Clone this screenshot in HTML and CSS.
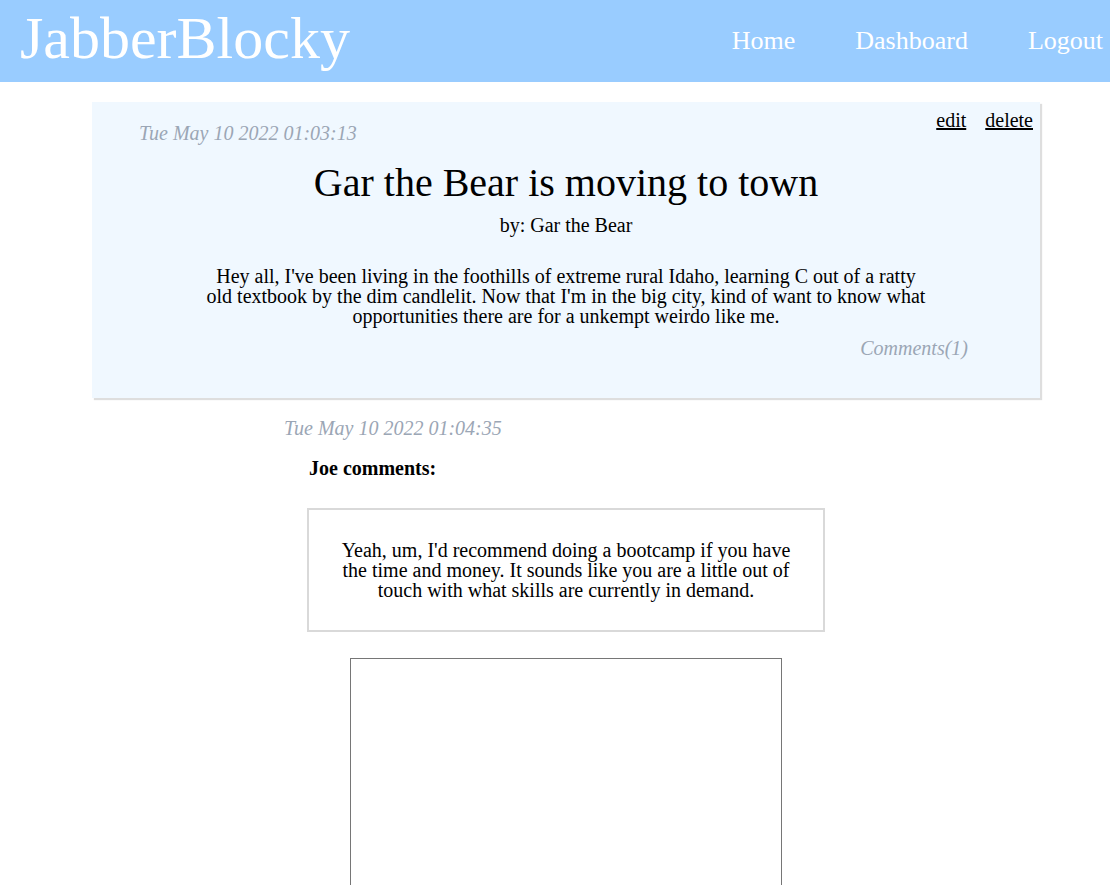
FILE: index.html
```html
<!DOCTYPE html>
<html lang="en">
<head>
<meta charset="utf-8">
<title>JabberBlocky</title>
<link rel="stylesheet" href="styles.css">
</head>
<body>
<header class="topbar">
  <div class="logo">JabberBlocky</div>
  <nav class="nav">
    <a href="#">Home</a>
    <a href="#">Dashboard</a>
    <a href="#">Logout</a>
  </nav>
</header>
<main class="main">
  <article class="card">
    <div class="card-head">
      <span class="stamp card-stamp">Tue May 10 2022 01:03:13</span>
      <div class="actions">
        <a href="#">edit</a>
        <a href="#">delete</a>
      </div>
    </div>
    <h2 class="title">Gar the Bear is moving to town</h2>
    <p class="by">by: Gar the Bear</p>
    <p class="body">Hey all, I've been living in the foothills of extreme rural Idaho, learning C out of a ratty old textbook by the dim candlelit. Now that I'm in the big city, kind of want to know what opportunities there are for a unkempt weirdo like me.</p>
    <div class="comments-link"><a href="#">Comments(1)</a></div>
  </article>
  <section class="comment">
    <div class="stamp comment-stamp">Tue May 10 2022 01:04:35</div>
    <div class="author">Joe comments:</div>
    <div class="comment-box">Yeah, um, I'd recommend doing a bootcamp if you have the time and money. It sounds like you are a little out of touch with what skills are currently in demand.</div>
    <textarea class="reply"></textarea>
  </section>
</main>
</body>
</html>
```
FILE: styles.css
```css
html, body {
  margin: 0;
  padding: 0;
  background: #ffffff;
}
body {
  font-family: "Liberation Serif", "Times New Roman", serif;
  color: #000;
  font-size: 20px;
}
.topbar {
  height: 82px;
  background: #99ccff;
  display: flex;
  justify-content: space-between;
  align-items: flex-start;
  padding: 0 7px 0 20px;
}
.logo {
  font-size: 60px;
  color: #ffffff;
  margin-top: 4px;
  line-height: normal;
}
.nav {
  display: flex;
  gap: 60px;
  margin-top: 26px;
}
.nav a {
  color: #ffffff;
  font-size: 26px;
  text-decoration: none;
  line-height: normal;
}
.main {
  margin: 20px 70px 0 92px;
}
.card {
  background: #f0f8ff;
  box-shadow: 2px 2px 1px rgba(0, 0, 0, 0.13);
  padding: 0 0 38px;
}
.card-head {
  display: flex;
  justify-content: space-between;
  align-items: flex-start;
  padding: 7px 7px 0 47px;
}
.stamp {
  font-style: italic;
  color: #9ba6b5;
  font-size: 20px;
}
.card-stamp {
  margin-top: 13px;
}
.actions {
  display: flex;
  gap: 19px;
}
.actions a {
  color: #000;
  text-decoration: underline;
}
.title {
  margin: 14px 0 0;
  font-size: 40px;
  font-weight: normal;
  text-align: center;
  line-height: normal;
}
.by {
  margin: 8px 0 0;
  text-align: center;
}
.body {
  margin: 29px auto 0;
  max-width: 724px;
  text-align: center;
  line-height: 20px;
}
.comments-link {
  margin-top: 11px;
  padding-right: 72px;
  text-align: right;
}
.comments-link a {
  color: #9ba6b5;
  font-style: italic;
  text-decoration: none;
}
.comment {
  width: 564px;
  margin: 19px auto 0;
}
.author {
  font-weight: bold;
  padding-left: 25px;
  margin-top: 17px;
}
.comment-box {
  margin: 28px 23px 0;
  border: 2px solid #d9d9d9;
  padding: 30px;
  text-align: center;
  line-height: 20px;
}
.reply {
  display: block;
  box-sizing: border-box;
  width: 432px;
  height: 260px;
  margin: 26px auto 0;
  border: 1px solid #767676;
  background: #fff;
  resize: none;
}
```
